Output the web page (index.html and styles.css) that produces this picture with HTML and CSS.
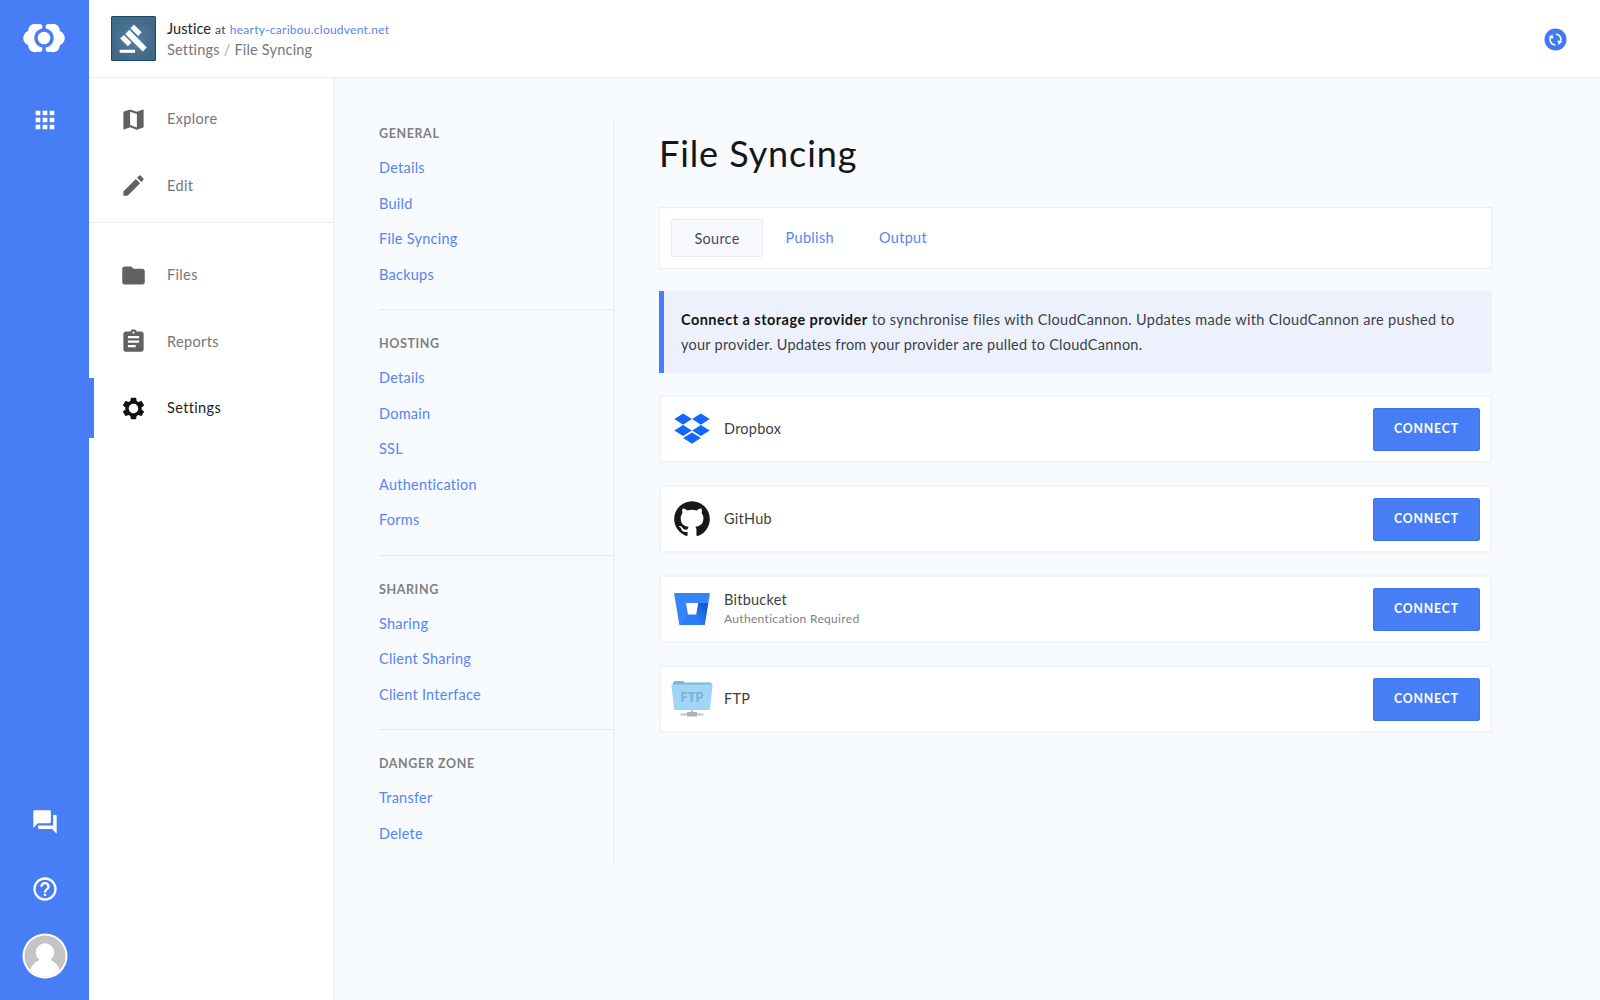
FILE: index.html
```html
<!DOCTYPE html>
<html lang="en">
<head>
<meta charset="utf-8">
<title>Justice - File Syncing</title>
<link rel="stylesheet" href="styles.css">
</head>
<body>
<div class="app">
  <aside class="rail">
    <svg class="brand" viewBox="0 0 42 30">
      <g fill="#fff">
        <circle cx="12" cy="7.500" r="6.800"/><circle cx="12" cy="22.500" r="6.800"/><circle cx="7.700" cy="15" r="7.500"/><circle cx="16.500" cy="4" r="2.900"/><circle cx="16.500" cy="26" r="2.900"/>
        <circle cx="30" cy="7.500" r="6.800"/><circle cx="30" cy="22.500" r="6.800"/><circle cx="34.300" cy="15" r="7.500"/><circle cx="25.500" cy="4" r="2.900"/><circle cx="25.500" cy="26" r="2.900"/>
      </g>
      <circle cx="21" cy="15" r="9.800" fill="#487ef5"/>
      <circle cx="21" cy="15" r="6.300" fill="#fff"/>
    </svg>
    <svg class="rail-icon apps" viewBox="0 0 24 24"><path d="M4 8h4V4H4v4zm6 12h4v-4h-4v4zm-6 0h4v-4H4v4zm0-6h4v-4H4v4zm6 0h4v-4h-4v4zm6-10v4h4V4h-4zm-6 4h4V4h-4v4zm6 6h4v-4h-4v4zm0 6h4v-4h-4v4z"/></svg>
    <div class="rail-bottom">
      <svg class="rail-icon" viewBox="0 0 24 24"><path d="M21 6h-2v9H6v2c0 .55.45 1 1 1h11l4 4V7c0-.55-.45-1-1-1zm-4 6V3c0-.55-.45-1-1-1H3c-.55 0-1 .45-1 1v14l4-4h10c.55 0 1-.45 1-1z"/></svg>
      <svg class="rail-icon" viewBox="0 0 24 24"><path d="M11 18h2v-2h-2v2zm1-16C6.480 2 2 6.480 2 12s4.480 10 10 10 10-4.480 10-10S17.520 2 12 2zm0 18c-4.410 0-8-3.590-8-8s3.590-8 8-8 8 3.590 8 8-3.590 8-8 8zm0-14c-2.210 0-4 1.790-4 4h2c0-1.100.9-2 2-2s2 .9 2 2c0 2-3 1.750-3 5h2c0-2.250 3-2.500 3-5 0-2.210-1.790-4-4-4z"/></svg>
      <svg class="avatar" viewBox="0 0 46 46">
        <defs><clipPath id="face"><circle cx="23" cy="23" r="20.500"/></clipPath></defs>
        <circle cx="23" cy="23" r="22.500" fill="#fff"/>
        <g clip-path="url(#face)"><path fill="#c4c4c4" d="M0 0h46v46H0z"/><circle cx="23" cy="19.500" r="9.200" fill="#fff"/><path fill="#fff" d="M7 46C7 34 12 29 18 27h10c6 2 11 7 11 19z"/></g>
      </svg>
    </div>
  </aside>
  <div class="page">
    <header class="topbar">
      <svg class="site-logo" viewBox="0 0 44 44">
        <defs><radialGradient id="steel"><stop offset="0" stop-color="#537f9f"/><stop offset="1" stop-color="#426a87"/></radialGradient></defs>
        <rect x=".5" y=".5" width="43" height="43" rx="1" fill="url(#steel)" stroke="#164b67"/>
        <g fill="#fff"><path d="M8.500 33h15v3h-15z"/><path d="M22.500 8.500l7.500 7.500-3.500 3.500-7.500-7.500zM12.500 18.500l7.500 7.500-3.500 3.500-7.500-7.500zM18 13.500l17 17.200-4 4L13.900 17.600z"/></g>
      </svg>
      <div class="crumbs">
        <div class="site"><span class="name">Justice</span> <span class="at">at</span> <a class="domain">hearty-caribou.cloudvent.net</a></div>
        <div class="path">Settings <i>/</i> File Syncing</div>
      </div>
      <svg class="sync" viewBox="0 0 24 24"><circle cx="12" cy="12" r="11.500" fill="#3f7af5"/><g fill="none" stroke="#fff" stroke-width="1.700"><path d="M12.300 6.500C16.800 6.700 18.600 10.500 17 14.500"/><path d="M11.700 17.700C7.200 17.500 5.400 13.500 7 9.700"/></g><path fill="#fff" d="M14 13l5.200 1.200-3.900 3.300zM10 11L4.800 9.800 8.700 6.500z"/></svg>
    </header>
    <div class="columns">
      <nav class="nav">
        <a class="nav-item"><svg viewBox="0 0 24 24"><path d="M20.500 3l-.16.03L15 5.100 9 3 3.360 4.900c-.21.07-.36.25-.36.48V20.500c0 .28.220.5.5.5l.16-.03L9 18.900l6 2.100 5.640-1.900c.21-.07.36-.25.36-.48V3.500c0-.28-.22-.5-.5-.5zM15 19l-6-2.110V5l6 2.110V19z"/></svg>Explore</a>
        <a class="nav-item"><svg viewBox="0 0 24 24"><path d="M3 17.250V21h3.750L17.810 9.940l-3.750-3.750L3 17.250zM20.710 7.040c.39-.39.39-1.020 0-1.410l-2.340-2.340c-.39-.39-1.020-.39-1.410 0l-1.830 1.830 3.750 3.750 1.830-1.830z"/></svg>Edit</a>
        <div class="rule"></div>
        <a class="nav-item"><svg viewBox="0 0 24 24"><path d="M10 4H4c-1.100 0-1.990.9-1.990 2L2 18c0 1.100.9 2 2 2h16c1.100 0 2-.9 2-2V8c0-1.100-.9-2-2-2h-8l-2-2z"/></svg>Files</a>
        <a class="nav-item"><svg viewBox="0 0 24 24"><path d="M19 3h-4.180C14.400 1.840 13.300 1 12 1c-1.300 0-2.400.84-2.820 2H5c-1.100 0-2 .9-2 2v14c0 1.100.9 2 2 2h14c1.100 0 2-.9 2-2V5c0-1.100-.9-2-2-2zm-7 0c.55 0 1 .45 1 1s-.45 1-1 1-1-.45-1-1 .45-1 1-1zm2 14H7v-2h7v2zm3-4H7v-2h10v2zm0-4H7V7h10v2z"/></svg>Reports</a>
        <a class="nav-item active"><svg viewBox="0 0 24 24"><path d="M19.140 12.940c.04-.3.060-.61.060-.94 0-.32-.02-.64-.07-.94l2.030-1.580c.18-.14.23-.41.12-.61l-1.920-3.320c-.12-.22-.37-.29-.59-.22l-2.390.96c-.5-.38-1.030-.7-1.620-.94l-.36-2.540c-.04-.24-.24-.41-.48-.41h-3.840c-.24 0-.43.170-.47.410l-.36 2.540c-.59.24-1.130.57-1.620.94l-2.390-.96c-.22-.08-.47 0-.59.220L2.740 8.870c-.12.210-.08.470.12.610l2.030 1.580c-.05.3-.09.630-.09.94s.02.640.07.940l-2.030 1.580c-.18.140-.23.410-.12.610l1.920 3.320c.12.220.37.290.59.220l2.390-.96c.5.380 1.030.7 1.620.94l.36 2.540c.05.240.24.410.48.410h3.840c.24 0 .44-.17.470-.41l.36-2.540c.59-.24 1.130-.56 1.620-.94l2.390.96c.22.080.47 0 .59-.22l1.920-3.320c.12-.22.070-.47-.12-.61l-2.010-1.580zM12 16.200c-2.300 0-4.200-1.900-4.200-4.200s1.900-4.200 4.200-4.200 4.200 1.900 4.200 4.200-1.900 4.200-4.200 4.200z"/></svg>Settings</a>
      </nav>
      <div class="content">
        <nav class="settings">
          <section><h2>General</h2><a>Details</a><a>Build</a><a>File Syncing</a><a>Backups</a></section>
          <section><h2>Hosting</h2><a>Details</a><a>Domain</a><a>SSL</a><a>Authentication</a><a>Forms</a></section>
          <section><h2>Sharing</h2><a>Sharing</a><a>Client Sharing</a><a>Client Interface</a></section>
          <section><h2>Danger Zone</h2><a>Transfer</a><a>Delete</a></section>
        </nav>
        <main class="main">
          <h1>File Syncing</h1>
          <div class="tabs"><a class="tab selected">Source</a><a class="tab">Publish</a><a class="tab">Output</a></div>
          <p class="notice"><span class="lead"><b>Connect a storage provider</b> to synchronise files with CloudCannon. Updates made with CloudCannon are pushed to</span><br>your provider. Updates from your provider are pulled to CloudCannon.</p>
          <div class="card">
            <svg class="logo" viewBox="0 0 42 42"><path fill="#1266fe" d="M12.100 5.500l8.800 5.600-8.800 5.600-8.800-5.600zM29.900 5.500l8.800 5.600-8.800 5.600-8.800-5.600zM12.100 16.900l8.800 5.600-8.800 5.600-8.800-5.600zM29.900 16.900l8.800 5.600-8.800 5.600-8.800-5.600zM21 24.500l8.800 5.600L21 35.700l-8.800-5.600z"/></svg>
            <div class="label">Dropbox</div><button>Connect</button>
          </div>
          <div class="card">
            <svg class="logo" viewBox="0 0 42 42"><path fill="#191717" transform="translate(3.200 3.200) scale(2.225)" d="M8 0C3.580 0 0 3.580 0 8c0 3.540 2.290 6.530 5.470 7.590.4.070.55-.17.550-.38 0-.19-.01-.82-.01-1.490-2.010.37-2.530-.49-2.690-.94-.09-.23-.48-.94-.82-1.130-.28-.15-.68-.52-.01-.53.63-.01 1.080.58 1.230.82.720 1.210 1.870.87 2.330.66.070-.52.280-.87.510-1.070-1.780-.2-3.640-.89-3.640-3.950 0-.87.310-1.590.82-2.150-.08-.2-.36-1.020.08-2.120 0 0 .67-.21 2.200.82.640-.18 1.320-.27 2-.27s1.360.09 2 .27c1.530-1.040 2.200-.82 2.200-.82.440 1.100.16 1.920.08 2.120.51.560.82 1.270.82 2.150 0 3.070-1.870 3.750-3.650 3.950.29.250.54.730.54 1.480 0 1.070-.01 1.930-.01 2.200 0 .21.150.46.550.38A8.010 8.010 0 0 0 16 8c0-4.420-3.580-8-8-8z"/></svg>
            <div class="label">GitHub</div><button>Connect</button>
          </div>
          <div class="card">
            <svg class="logo" viewBox="0 0 42 42">
              <defs><linearGradient id="bucket" x1="36" y1="15" x2="23" y2="29" gradientUnits="userSpaceOnUse"><stop offset="0" stop-color="#0f52cc"/><stop offset="1" stop-color="#2c7cf8"/></linearGradient></defs>
              <path fill="#3485fb" d="M3.500 5h35c.3 0 .5.3.4.600L33.800 36.500c-.1.300-.3.500-.6.500H9.100c-.4 0-.7-.2-.8-.6L3.100 5.600c0-.3.100-.6.400-.6z"/>
              <path fill="url(#bucket)" d="M37 15H27l-2 11.500h-8L8.500 36.600c.2.200.4.400.6.400h24.100c.3 0 .5-.2.600-.5z"/>
              <path fill="#fff" d="M15 15h12.200l-2 11.500h-8.200z"/>
            </svg>
            <div class="label">Bitbucket<small>Authentication Required</small></div><button>Connect</button>
          </div>
          <div class="card">
            <svg class="logo" viewBox="0 0 42 42">
              <path fill="#7ab8df" d="M2 8V4.500l1.500-1.500h8.500l1.500 1.500H39.500l1.500 1.500V8z"/>
              <path fill="#a0d5f5" d="M.3 6.500h41.400L38.800 32H3.200z"/>
              <path fill="#c3c3c3" d="M20 32h2v3h-2zM9.500 35.500h23v2h-23z"/><path fill="#b0b0b0" d="M16 34h10v4.500H16z"/>
              <text x="21" y="24" text-anchor="middle" class="ftp-mark">FTP</text>
            </svg>
            <div class="label">FTP</div><button>Connect</button>
          </div>
        </main>
      </div>
    </div>
  </div>
</div>
</body>
</html>
```
FILE: styles.css
```css
* { box-sizing: border-box; }
body { margin: 0; font: 14.5px/20px Lato, "Open Sans", sans-serif; letter-spacing: .25px; color: #3c3f42; }
a { color: #5685f2; }
svg { display: block; flex: none; }
.app { display: flex; width: 1600px; height: 1000px; overflow: hidden; }

.rail { width: 89px; flex: none; background: #487ef5; display: flex; flex-direction: column; align-items: center; padding: 23px 0 21px; }
.brand { width: 42px; height: 30px; margin-right: 2px; }
.rail-icon { width: 28px; height: 28px; fill: #fff; }
.apps { margin-top: 53px; }
.rail-bottom { margin-top: auto; display: flex; flex-direction: column; align-items: center; gap: 39px; }
.avatar { width: 46px; height: 46px; margin-top: -9px; }

.page { flex: 1; display: flex; flex-direction: column; background: #f7faff; }
.topbar { height: 78px; flex: none; background: #fff; border-bottom: 1px solid #ebecee; display: flex; align-items: center; padding: 0 33px 0 22px; }
.site-logo { width: 45px; height: 45px; }
.crumbs { margin: 1px auto 0 11px; }
.name { color: #202224; letter-spacing: .1px; }
.at { color: #444; font-size: 12px; }
.domain { font-size: 12px; }
.path { color: #777; letter-spacing: .2px; }
.path i { font-style: normal; color: #aaa; }
.sync { width: 23px; height: 23px; margin-top: 1px; }

.columns { flex: 1; display: flex; }
.nav { width: 246px; flex: none; background: #fff; border-right: 2px solid #f2f3f5; padding-top: 11px; display: flex; flex-direction: column; gap: 6.700px; }
.nav-item { height: 60px; flex: none; display: flex; align-items: center; gap: 20px; padding-left: 31px; color: #757575; letter-spacing: .35px; }
.nav-item svg { width: 27px; height: 27px; fill: #616161; }
.nav-item.active { color: #222; border-left: 5.500px solid #487ef5; padding-left: 26px; }
.nav-item.active svg { fill: #111; }
.rule { height: 1px; background: #e9eaec; margin-bottom: 15px; }

.content { flex: 1; display: flex; align-items: flex-start; padding: 44px 108px 0 44px; }
.settings { width: 236px; flex: none; border-right: 2px solid #eff1f4; padding: 1px 0 15px; }
.settings section { display: flex; flex-direction: column; }
.settings section + section { border-top: 1px solid #e6e8eb; margin-top: 16.800px; padding-top: 23px; }
.settings h2 { margin: 0 0 5px; font-size: 12.500px; line-height: 22px; font-weight: 700; text-transform: uppercase; color: #808080; letter-spacing: .6px; }
.settings a { height: 35.550px; line-height: 35.550px; }

.main { flex: 1; padding-left: 44px; }
h1 { margin: 6px 0 28px; font-size: 36px; line-height: 51px; font-weight: 400; color: #151515; letter-spacing: .9px; }
.tabs { height: 62px; background: #fff; border: 1.500px solid #ebedef; display: flex; align-items: center; padding: 0 11px; }
.tab { height: 38px; line-height: 38px; padding: 0 22.500px; letter-spacing: .32px; }
.tab.selected { background: #f8f9ff; border: 1px solid #e9ebee; border-radius: 2px; color: #444a63; letter-spacing: .25px; }
.notice { margin: 22px 0; height: 82px; background: #edf1fe; border-left: 5px solid #487ef5; padding: 17px 0 0 17px; line-height: 24.600px; white-space: nowrap; }
.notice b { color: #151515; letter-spacing: .47px; }
.lead { letter-spacing: .33px; }
.card { height: 68px; background: #fff; border: 2px solid #f3f4f6; display: flex; align-items: center; padding: 0 10px; margin-bottom: 22px; }
.logo { width: 42px; height: 42px; }
.label { margin: 0 auto 0 11px; }
.label small { display: block; margin-top: -1px; font-size: 12px; color: #808080; line-height: 20px; letter-spacing: .32px; }
.ftp-mark { font: 900 12.500px Lato, sans-serif; fill: #75b0de; letter-spacing: .2px; }
button { width: 107px; height: 43px; border: 1px solid #3b76f5; border-radius: 2px; background: #487ef5; color: #fff; font: 700 12.300px Lato, sans-serif; letter-spacing: .8px; text-transform: uppercase; padding: 0 0 2px; }
```
